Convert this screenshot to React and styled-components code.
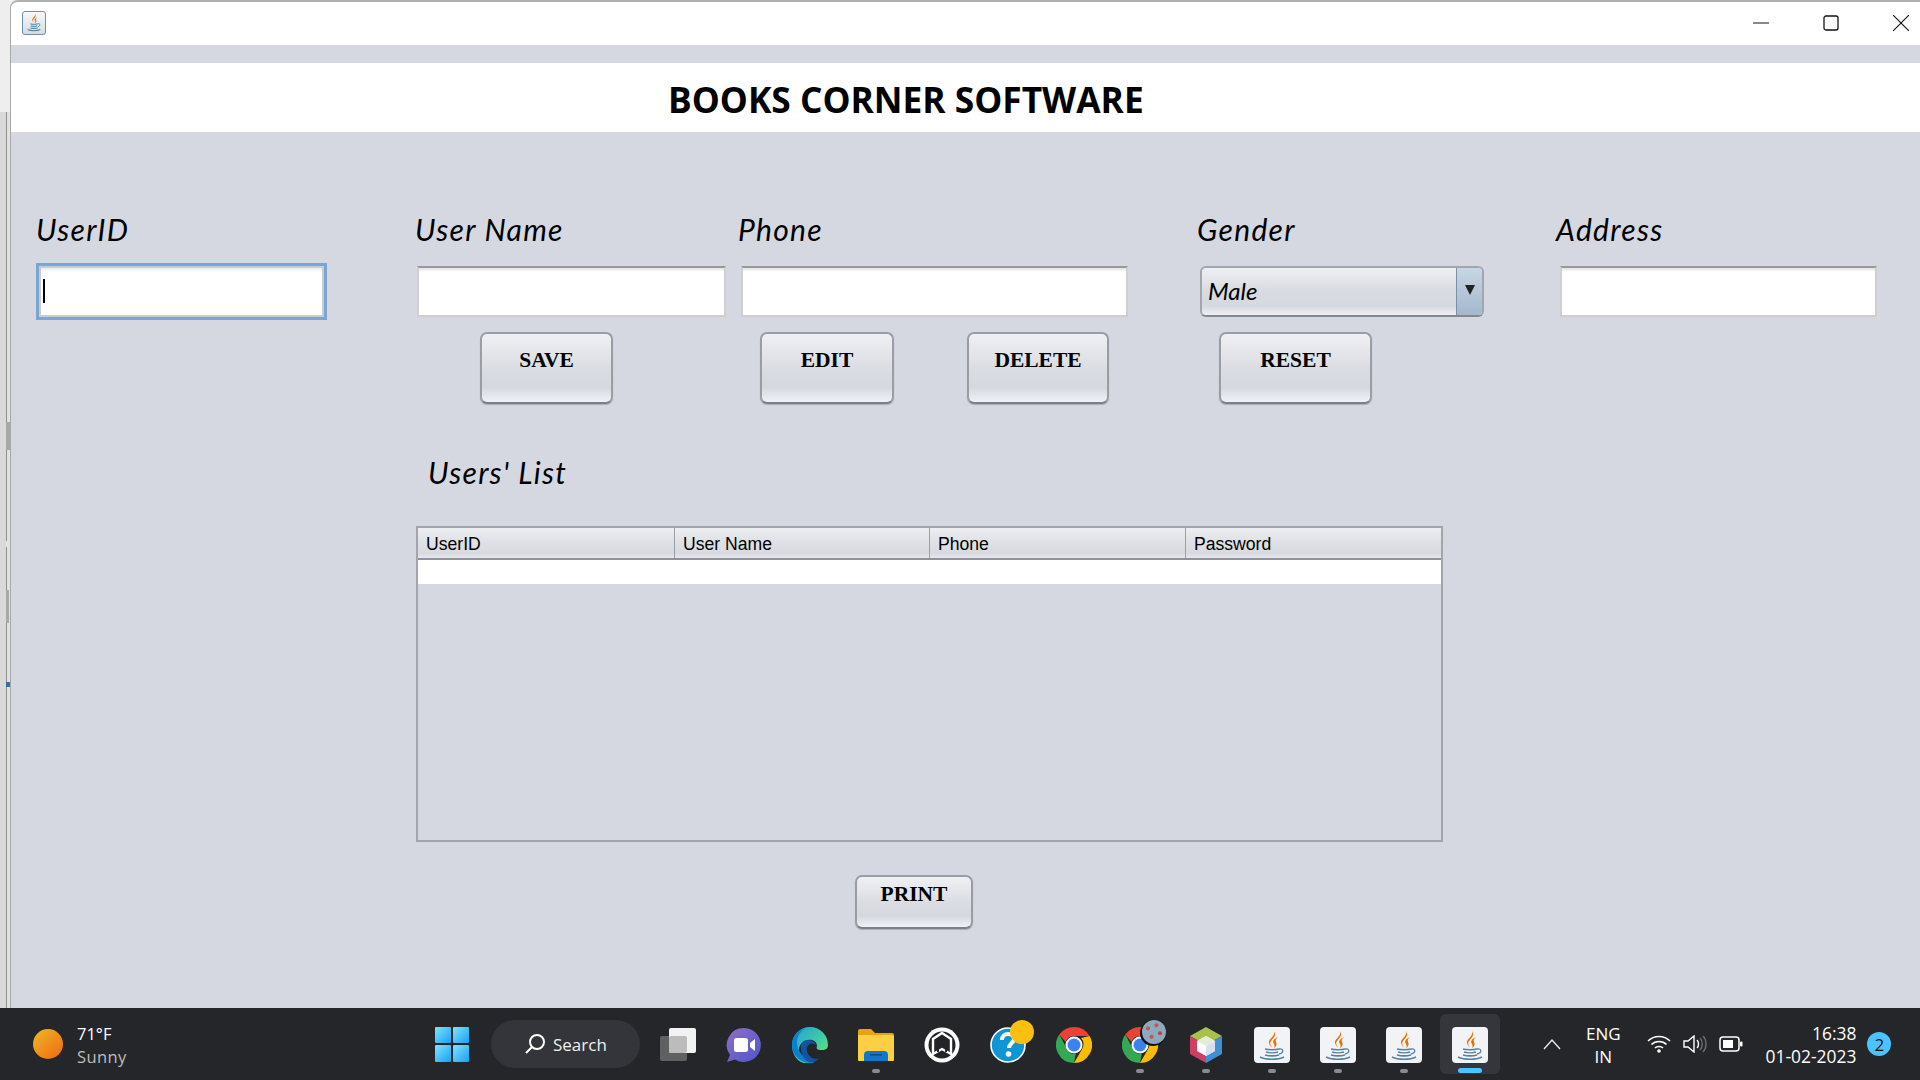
import React from "react";
import styled, { createGlobalStyle } from "styled-components";

const GlobalStyle = createGlobalStyle`
  html, body {
    margin: 0;
    padding: 0;
    background: #f1f1f1;
    overflow: hidden;
  }
  * {
    box-sizing: border-box;
  }
`;

const Screen = styled.div`
  width: 1920px;
  height: 1080px;
  display: flex;
  flex-direction: column;
`;

const Desktop = styled.div`
  flex: 1;
  display: flex;
  min-height: 0;
`;

const Sliver = styled.div`
  width: 10px;
  position: relative;
  background: #eeeeee;
`;

const SliverBand = styled.div`
  position: absolute;
  top: 112px;
  left: 0;
  right: 0;
  bottom: 0;
  background: linear-gradient(to right, #d9d9d9 0 6px, #8f8f8f 6px 7px, #e2e2e2 7px);
`;

const SliverTick = styled.span`
  position: absolute;
  left: 6px;
  top: ${(p) => p.$top}px;
  width: ${(p) => p.$width || 4}px;
  height: ${(p) => p.$height}px;
  background: ${(p) => p.$color};
`;

const Window = styled.div`
  flex: 1;
  display: flex;
  flex-direction: column;
  background: #d5d8e0;
  border-top: 2px solid #b0b0b0;
  border-left: 1px solid #a8a8a8;
  border-top-left-radius: 8px;
  overflow: hidden;
`;

const TitleBar = styled.div`
  height: 43px;
  background: #fff;
  display: flex;
  align-items: center;
  justify-content: space-between;
  padding: 0 11px 2px 11px;
`;

const AppIcon = styled.div`
  width: 24px;
  height: 24px;
  display: flex;
  align-items: center;
  justify-content: center;
  background: linear-gradient(#f7f9fb, #d3dce6);
  border: 1px solid #6f8fae;
  border-radius: 3px;
`;

const WinControls = styled.div`
  display: flex;
  align-items: center;
  gap: 54px;
`;

const Banner = styled.div`
  margin-top: 18px;
  height: 69px;
  background: #fff;
  padding: 2px 0 0 657px;
  display: flex;
  align-items: center;
`;

const Title = styled.h1`
  margin: 0;
  font-family: "Open Sans", "Noto Sans", sans-serif;
  font-size: 35.3px;
  font-weight: 700;
  color: #000;
  white-space: nowrap;
`;

const Form = styled.div`
  flex: 1;
  padding-top: 82px;
`;

const FieldRow = styled.div`
  display: flex;
  padding-left: 28px;
`;

const Field = styled.div`
  display: flex;
  flex-direction: column;
  flex: none;
  margin-left: ${(p) => p.$gap || 0}px;
  width: ${(p) => p.$width}px;
`;

const Label = styled.label`
  font-family: "Lato", sans-serif;
  font-style: italic;
  font-size: 30px;
  letter-spacing: 1.3px;
  line-height: 30px;
  height: 30px;
  margin-bottom: 22px;
  margin-left: ${(p) => p.$shift || 0}px;
  color: #000;
  white-space: nowrap;
`;

const TextBox = styled.input`
  display: block;
  width: 100%;
  height: 51px;
  padding: 0 8px;
  outline: none;
  background: #fff;
  border: 2px solid #cfcfd2;
  border-top-color: #98999c;
  box-shadow: inset 0 4px 3px -2px rgba(0, 0, 0, 0.12);
  ${(p) => p.$focused && `
    box-shadow: 0 0 0 3px #7ba6d1, inset 0 4px 3px -2px rgba(0, 0, 0, 0.08);
    border-color: #c9ccd2;
  `}
`;

const FocusWrap = styled.div`
  position: relative;
`;

const Caret = styled.span`
  position: absolute;
  left: 4px;
  top: 13px;
  width: 2px;
  height: 24px;
  background: #000;
`;

const Combo = styled.div`
  height: 51px;
  display: flex;
  align-items: stretch;
  border: 2px solid #a3a6ac;
  border-bottom-color: #84878d;
  border-radius: 6px;
  overflow: hidden;
  background: linear-gradient(#eff0f3 0%, #dadce2 45%, #d5d8de 80%, #eef0f5 100%);
`;

const ComboValue = styled.div`
  flex: 1;
  display: flex;
  align-items: center;
  padding: 0 0 2px 6px;
  font-family: "Lato", sans-serif;
  font-style: italic;
  font-size: 24px;
  color: #000;
`;

const ComboArrow = styled.div`
  width: 26px;
  display: flex;
  align-items: center;
  justify-content: center;
  border-left: 1px solid #7f8fa3;
  background: linear-gradient(#c9d6e4, #a3b8cd);
`;

const ArrowGlyph = styled.span`
  width: 0;
  height: 0;
  margin-bottom: 4px;
  border-left: 5px solid transparent;
  border-right: 5px solid transparent;
  border-top: 10px solid #222;
`;

const ButtonRow = styled.div`
  display: flex;
  margin-top: 15px;
  padding-left: 469px;
`;

const ActionButton = styled.button`
  width: ${(p) => p.$width}px;
  height: ${(p) => p.$height || 72}px;
  margin-left: ${(p) => p.$gap || 0}px;
  padding: 0 0 ${(p) => p.$drop || 16}px;
  font-family: "Liberation Serif", serif;
  font-size: 21.5px;
  font-weight: 700;
  color: #000;
  border: 2px solid #9a9da3;
  border-bottom-color: #7c7f85;
  border-radius: 7px;
  background: linear-gradient(#eff0f3 0%, #dbdde3 50%, #d5d8df 78%, #f0f2f7 100%);
  box-shadow: 0 1px 1px rgba(0, 0, 0, 0.2);
`;

const ListHeading = styled.div`
  margin: 53px 0 1px 417px;
  height: 30px;
  line-height: 30px;
  font-family: "Lato", sans-serif;
  font-style: italic;
  font-size: 30px;
  letter-spacing: 1.3px;
  color: #000;
`;

const TableBox = styled.div`
  margin: 39px 0 0 405px;
  width: 1027px;
  height: 316px;
  border: 2px solid #a2a5ac;
`;

const HeadRow = styled.div`
  display: grid;
  grid-template-columns: 257px 255px 256px 1fr;
  height: 32px;
  border-bottom: 2px solid #8f929a;
  background: linear-gradient(#eceef1 0%, #dfe1e6 45%, #d8dae0 85%, #e6e8ee 100%);
`;

const HeadCell = styled.div`
  display: flex;
  align-items: center;
  padding: 2px 0 0 8px;
  font-family: "Liberation Sans", sans-serif;
  font-size: 17.6px;
  color: #000;
  border-right: 1px solid #9b9ea5;
  &:last-child {
    border-right: none;
  }
`;

const EmptyRow = styled.div`
  height: 24px;
  background: #fff;
`;

const PrintRow = styled.div`
  margin: 33px 0 0 844px;
`;

const Taskbar = styled.div`
  height: 72px;
  background: #24262a;
  display: flex;
  align-items: center;
  font-family: "Open Sans", "Noto Sans", sans-serif;
  color: #fff;
`;

const Weather = styled.div`
  width: 435px;
  display: flex;
  align-items: center;
  padding-left: 33px;
  gap: 14px;
`;

const Sun = styled.div`
  width: 30px;
  height: 30px;
  border-radius: 50%;
  background: linear-gradient(135deg, #f0b72a, #ee6a0c);
`;

const TwoLines = styled.div`
  display: flex;
  flex-direction: column;
  align-items: ${(p) => p.$align || "flex-start"};
  margin-left: ${(p) => p.$gap || 0}px;
  padding-top: 2px;
  font-size: ${(p) => p.$size || 17}px;
  line-height: 23px;
`;

const Dim = styled.span`
  color: #bdbec0;
  letter-spacing: 0.4px;
`;

const StartButton = styled.div`
  width: 34px;
  height: 35px;
  margin-right: 22px;
  display: grid;
  grid-template-columns: 1fr 1fr;
  gap: 2px;
`;

const StartPane = styled.span`
  background: linear-gradient(135deg, #7fe3ff, #19a0f5);
  border-radius: 1px;
`;

const SearchPill = styled.div`
  width: 149px;
  height: 48px;
  margin-right: 8px;
  display: flex;
  align-items: center;
  padding-left: 33px;
  gap: 7px;
  border-radius: 24px;
  background: #33353a;
  font-size: 17px;
  color: #f0f0f0;
`;

const TaskIcons = styled.div`
  display: flex;
  gap: 6px;
`;

const TaskCell = styled.div`
  width: 60px;
  height: 60px;
  position: relative;
  display: flex;
  align-items: center;
  justify-content: center;
  padding-top: 1px;
  border-radius: 6px;
  background: ${(p) => (p.$active ? "#34363b" : "transparent")};
`;

const RunDot = styled.span`
  position: absolute;
  bottom: 1px;
  left: 50%;
  transform: translateX(-50%);
  width: ${(p) => (p.$active ? 24 : 8)}px;
  height: ${(p) => (p.$active ? 5 : 4)}px;
  border-radius: 3px;
  background: ${(p) => (p.$active ? "#4cc2ff" : "#8a8b8e")};
`;

const Badge = styled.span`
  position: absolute;
  top: 6px;
  right: 4px;
  width: 24px;
  height: 24px;
  border-radius: 50%;
  background: ${(p) => p.$bg};
`;

const Speckle = styled(Badge)`
  background:
    radial-gradient(circle at 25% 35%, #c25555 0 1.5px, transparent 2.5px),
    radial-gradient(circle at 60% 22%, #c25555 0 1.5px, transparent 2.5px),
    radial-gradient(circle at 75% 55%, #b04a4a 0 1.5px, transparent 2.5px),
    radial-gradient(circle at 40% 70%, #c25555 0 1.5px, transparent 2.5px),
    #8ea9bd;
  box-shadow: -1px 1px 0 1px #111;
`;

const Tray = styled.div`
  margin-left: 43px;
  display: flex;
  align-items: center;
`;

const TrayIcons = styled.div`
  display: flex;
  align-items: center;
  gap: 12px;
  margin: 0 23px 0 26px;
`;

const Notify = styled.div`
  width: 24px;
  height: 24px;
  margin-left: 11px;
  border-radius: 50%;
  background: #4cc2ff;
  color: #111;
  font-size: 17px;
  display: flex;
  align-items: center;
  justify-content: center;
`;

const JavaMark = ({ size = 18 }) => (
  <svg width={size} height={size * 1.2} viewBox="0 0 30 36">
    <path d="M17 1c2 5-6 8-5 13 .4 2 2 3 3 5-1-3-3-4-1-7 2-3 6-5 3-11z" fill="#e76f00" />
    <path d="M21 8c-4 2-6 4-4 7 .7 1 .8 2 0 4 3-2 3-4 2-6-.8-2 0-3 2-5z" fill="#e76f00" />
    <path d="M8 20c3 1 11 1 14 0M9 24c3 1 9 1 12 0M8 28c4 1 10 1 14 0" stroke="#5382a1" strokeWidth="2" fill="none" />
    <path d="M22 20c5-1 6 4 0 6" stroke="#5382a1" strokeWidth="1.600" fill="none" />
    <path d="M3 31c6 3 18 3 24 0" stroke="#5382a1" strokeWidth="2" fill="none" />
  </svg>
);

const JavaTile = () => (
  <svg width="36" height="36" viewBox="0 0 36 36">
    <rect width="36" height="36" rx="4" fill="#f1f3f6" />
    <path d="M20 4c2 5-6 8-5 12 .4 2 2 3 3 5-1-3-3-4-1-7 2-3 6-5 3-10z" fill="#e76f00" />
    <path d="M24 10c-4 2-6 4-4 7 .7 1 .8 2 0 4 3-2 3-4 2-6-.8-2 0-3 2-5z" fill="#e76f00" />
    <path d="M11 22c3 1 11 1 14 0M12 25c3 1 9 1 12 0M11 28c4 1 10 1 14 0" stroke="#5382a1" strokeWidth="1.500" fill="none" />
    <path d="M25 22c5-1 5 4 0 5" stroke="#5382a1" strokeWidth="1.300" fill="none" />
    <path d="M6 30c6 3 18 3 24 0" stroke="#5382a1" strokeWidth="1.500" fill="none" />
  </svg>
);

const TaskView = () => (
  <svg width="36" height="36" viewBox="0 0 36 36">
    <rect x="0" y="9" width="27" height="25" rx="2" fill="#5f6062" />
    <rect x="9" y="1" width="27" height="25" rx="2" fill="#f2f2f2" />
    <rect x="9" y="9" width="18" height="17" rx="2" fill="#bcbcbc" />
  </svg>
);

const MeetIcon = () => (
  <svg width="36" height="36" viewBox="0 0 36 36">
    <defs>
      <linearGradient id="meet" x1="0" y1="0" x2="1" y2="1">
        <stop offset="0" stopColor="#8f6fc4" />
        <stop offset="1" stopColor="#4f55c9" />
      </linearGradient>
    </defs>
    <path d="M18 1a17 17 0 1 1-9 31.500L1 35l3-7A17 17 0 0 1 18 1z" fill="url(#meet)" />
    <rect x="8" y="11" width="14" height="14" rx="2.500" fill="#fff" />
    <path d="M24 16l5-4v12l-5-4z" fill="#fff" />
  </svg>
);

const EdgeIcon = () => (
  <svg width="36" height="36" viewBox="0 0 36 36">
    <defs>
      <linearGradient id="edgeA" x1="0" y1="0" x2="1" y2="1">
        <stop offset="0" stopColor="#1c9fdc" />
        <stop offset="0.6" stopColor="#45cfa0" />
        <stop offset="1" stopColor="#7be05a" />
      </linearGradient>
    </defs>
    <path d="M0 18A18 18 0 0 1 36 18c0 3-2 5-6 5-5 0-6-1-5-4 0-4-4-7-9-6-7 1-10 7-9 13 1 5 6 9 12 10-4 1-8 0-10-1C3 32 0 25 0 18z" fill="url(#edgeA)" />
    <path d="M0 18C0 10 6 3 14 1 8 4 5 9 5 15c0 9 7 18 18 20-2 1-3 1-5 1C8 36 0 28 0 18z" fill="#0c7fd1" />
    <path d="M9 22c-1-6 2-9 7-9 4 0 7 2 8 5-2-1-4-2-6-1-4 2-4 6-2 10 2 3 5 5 9 5 1 0 2 0 3-1-2 2-5 4-9 4C14 35 9 29 9 22z" fill="#10569f" />
  </svg>
);

const FolderIcon = () => (
  <svg width="36" height="36" viewBox="0 0 36 36">
    <path d="M0 4a2 2 0 0 1 2-2h11l4 4h17a2 2 0 0 1 2 2v4H0z" fill="#e5a50f" />
    <path d="M0 8h34a2 2 0 0 1 2 2v23a1 1 0 0 1-1 1H1a1 1 0 0 1-1-1z" fill="#fccf45" />
    <path d="M6 34v-6a4 4 0 0 1 4-4h16a4 4 0 0 1 4 4v6z" fill="#0f78c8" />
    <rect x="12" y="27" width="12" height="1.600" fill="#0b4f8c" />
  </svg>
);

const HexHouse = () => (
  <svg width="36" height="36" viewBox="0 0 36 36">
    <circle cx="18" cy="18" r="17.500" fill="#fff" />
    <circle cx="18" cy="18" r="13.500" fill="#222428" />
    <path d="M18 6l9 6v15l-9-5-9 5V12z" fill="none" stroke="#fff" strokeWidth="2.400" />
    <path d="M14 25V13l4-3 4 3v12" fill="none" stroke="#222428" strokeWidth="2" />
  </svg>
);

const HelpIcon = () => (
  <svg width="36" height="36" viewBox="0 0 36 36">
    <circle cx="18" cy="18" r="17" fill="#0d95d6" stroke="#fff" strokeWidth="1.600" />
    <path d="M12 13c0-4 3-6 6-6s6 2 6 5c0 4-5 4-5 9" fill="none" stroke="#fff" strokeWidth="4" />
    <circle cx="18.500" cy="27" r="2.800" fill="#fff" />
  </svg>
);

const ChromeIcon = () => (
  <svg width="36" height="36" viewBox="0 0 36 36">
    <path d="M18 0a18 18 0 0 1 15.600 9H18a9 9 0 0 0-8.500 6L3.300 7.600A18 18 0 0 1 18 0z" fill="#ea4335" />
    <path d="M33.600 9A18 18 0 0 1 18 36l7.800-13.500A9 9 0 0 0 25 11z" fill="#fbbc05" />
    <path d="M18 36A18 18 0 0 1 3.300 7.600l7.500 13.800a9 9 0 0 0 9 5.500L18 36z" fill="#34a853" />
    <circle cx="18" cy="18" r="8.500" fill="#fff" />
    <circle cx="18" cy="18" r="6.500" fill="#3b82f1" />
  </svg>
);

const CubeIcon = () => (
  <svg width="32" height="36" viewBox="0 0 32 36">
    <path d="M16 0l16 9-16 9L0 9z" fill="#a9c04b" />
    <path d="M32 9v18l-16 9V18z" fill="#3f8fd2" />
    <path d="M0 9v18l16 9V18z" fill="#cf3f64" />
    <path d="M16 9l9 5v10l-9 5-9-5V14z" fill="#fff" />
    <path d="M16 9l9 5-9 5-9-5z" fill="#e6ebd6" />
    <path d="M25 14v10l-9 5V19z" fill="#d5deea" />
  </svg>
);

const taskApps = [
  { id: "view", icon: <TaskView /> },
  { id: "meet", icon: <MeetIcon /> },
  { id: "edge", icon: <EdgeIcon /> },
  { id: "files", icon: <FolderIcon />, running: true },
  { id: "hex", icon: <HexHouse /> },
  { id: "help", icon: <HelpIcon />, badge: <Badge $bg="#fdbf0f" /> },
  { id: "chrome", icon: <ChromeIcon /> },
  { id: "chrome2", icon: <ChromeIcon />, badge: <Speckle />, running: true },
  { id: "netbeans", icon: <CubeIcon />, running: true },
  { id: "java1", icon: <JavaTile />, running: true },
  { id: "java2", icon: <JavaTile />, running: true },
  { id: "java3", icon: <JavaTile />, running: true },
  { id: "java4", icon: <JavaTile />, running: true, active: true },
];

const columns = ["UserID", "User Name", "Phone", "Password"];

const App = () => {
  return (
    <Screen>
      <GlobalStyle />
      <Desktop>
        <Sliver>
          <SliverBand />
          <SliverTick $top={422} $height={28} $color="#a8a8a8" />
          <SliverTick $top={541} $height={6} $color="#e2e2e2" $width={1} />
          <SliverTick $top={590} $height={33} $color="#a8a8a8" $width={3} />
          <SliverTick $top={682} $height={5} $color="#2f6fa8" />
        </Sliver>
        <Window>
          <TitleBar>
            <AppIcon>
              <JavaMark size={16} />
            </AppIcon>
            <WinControls>
              <svg width="16" height="16" viewBox="0 0 16 16">
                <path d="M0 8h16" stroke="#111" strokeWidth="1" />
              </svg>
              <svg width="16" height="16" viewBox="0 0 16 16">
                <rect x="1" y="1" width="14" height="14" rx="2" fill="none" stroke="#111" strokeWidth="1.300" />
              </svg>
              <svg width="16" height="16" viewBox="0 0 16 16">
                <path d="M0 0l16 16M16 0L0 16" stroke="#111" strokeWidth="1.100" />
              </svg>
            </WinControls>
          </TitleBar>
          <Banner>
            <Title>BOOKS CORNER SOFTWARE</Title>
          </Banner>
          <Form>
            <FieldRow>
              <Field $width={285}>
                <Label $shift={-3}>UserID</Label>
                <FocusWrap>
                  <TextBox $focused readOnly />
                  <Caret />
                </FocusWrap>
              </Field>
              <Field $width={309} $gap={93}>
                <Label $shift={-2}>User Name</Label>
                <TextBox readOnly />
              </Field>
              <Field $width={387} $gap={15}>
                <Label $shift={-3}>Phone</Label>
                <TextBox readOnly />
              </Field>
              <Field $width={284} $gap={72}>
                <Label $shift={-3}>Gender</Label>
                <Combo>
                  <ComboValue>Male</ComboValue>
                  <ComboArrow>
                    <ArrowGlyph />
                  </ComboArrow>
                </Combo>
              </Field>
              <Field $width={317} $gap={76}>
                <Label $shift={-4}>Address</Label>
                <TextBox readOnly />
              </Field>
            </FieldRow>
            <ButtonRow>
              <ActionButton $width={133}>SAVE</ActionButton>
              <ActionButton $width={134} $gap={147}>EDIT</ActionButton>
              <ActionButton $width={142} $gap={73}>DELETE</ActionButton>
              <ActionButton $width={153} $gap={110}>RESET</ActionButton>
            </ButtonRow>
            <ListHeading>Users' List</ListHeading>
            <TableBox>
              <HeadRow>
                {columns.map((name) => (
                  <HeadCell key={name}>{name}</HeadCell>
                ))}
              </HeadRow>
              <EmptyRow />
            </TableBox>
            <PrintRow>
              <ActionButton $width={118} $height={54} $drop={15}>PRINT</ActionButton>
            </PrintRow>
          </Form>
        </Window>
      </Desktop>
      <Taskbar>
        <Weather>
          <Sun />
          <TwoLines $size={16.5}>
            <span>71°F</span>
            <Dim>Sunny</Dim>
          </TwoLines>
        </Weather>
        <StartButton>
          <StartPane />
          <StartPane />
          <StartPane />
          <StartPane />
        </StartButton>
        <SearchPill>
          <svg width="22" height="22" viewBox="0 0 22 22">
            <circle cx="13" cy="9" r="7" fill="none" stroke="#fff" strokeWidth="2" />
            <path d="M8 14l-6 6" stroke="#fff" strokeWidth="2" />
          </svg>
          Search
        </SearchPill>
        <TaskIcons>
          {taskApps.map((app) => (
            <TaskCell key={app.id} $active={app.active}>
              {app.icon}
              {app.badge}
              {app.running && <RunDot $active={app.active} />}
            </TaskCell>
          ))}
        </TaskIcons>
        <Tray>
          <svg width="18" height="11" viewBox="0 0 18 11">
            <path d="M1 10l8-9 8 9" fill="none" stroke="#eee" strokeWidth="1.300" />
          </svg>
          <TwoLines $align="center" $gap={25}>
            <span>ENG</span>
            <span>IN</span>
          </TwoLines>
          <TrayIcons>
            <svg width="24" height="18" viewBox="0 0 24 18">
              <path d="M1 6c6-6 16-6 22 0M4.500 9.500c4-4 11-4 15 0M8 13c2-2 6-2 8 0" fill="none" stroke="#fff" strokeWidth="1.600" />
              <circle cx="12" cy="16" r="1.800" fill="#fff" />
            </svg>
            <svg width="24" height="18" viewBox="0 0 24 18">
              <path d="M1 6h4l6-5v16l-6-5H1z" fill="none" stroke="#fff" strokeWidth="1.400" />
              <path d="M14 5c2 2 2 6 0 8" fill="none" stroke="#fff" strokeWidth="1.400" />
              <path d="M17 3c3 3 3 9 0 12M20 1c4 4 4 12 0 16" fill="none" stroke="#6a6b6e" strokeWidth="1.400" />
            </svg>
            <svg width="24" height="16" viewBox="0 0 24 16">
              <rect x="1" y="1" width="19" height="14" rx="3" fill="none" stroke="#fff" strokeWidth="1.500" />
              <rect x="4" y="4" width="10" height="8" fill="#fff" />
              <rect x="21" y="5.500" width="2.500" height="5" rx="1" fill="#fff" />
            </svg>
          </TrayIcons>
          <TwoLines $align="flex-end" $size={17.4}>
            <span>16:38</span>
            <span>01-02-2023</span>
          </TwoLines>
          <Notify>2</Notify>
        </Tray>
      </Taskbar>
    </Screen>
  );
};

export default App;
